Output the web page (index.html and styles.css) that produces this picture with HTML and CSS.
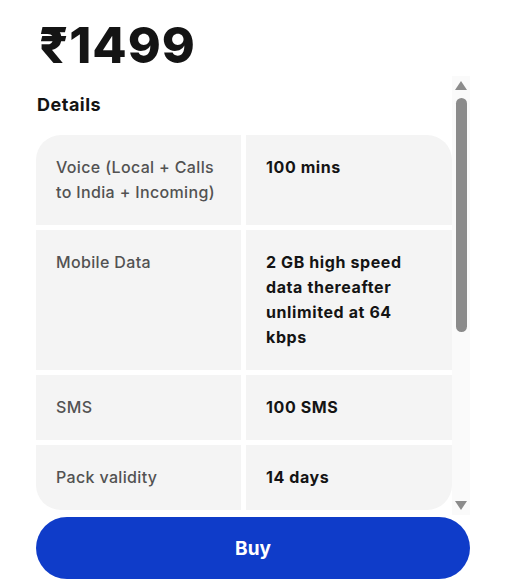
FILE: index.html
```html
<!DOCTYPE html>
<html lang="en">
<head>
    <meta charset="UTF-8">
    <meta name="viewport" content="width=device-width, initial-scale=1.0">
    <title>Pack details</title>
    <link rel="stylesheet" href="styles.css">
</head>
<body>

    <div class="page">
        <h1 class="price">₹1499</h1>

        <!-- Plan details with its scroll bar -->
        <div class="details-box">
            <div class="details-scroll">
                <h2>Details</h2>
                <div class="details-table">
                    <div class="cell label">Voice (Local + Calls to India + Incoming)</div>
                    <div class="cell value">100 mins</div>
                    <div class="cell label">Mobile Data</div>
                    <div class="cell value">2 GB high speed data thereafter unlimited at 64 kbps</div>
                    <div class="cell label">SMS</div>
                    <div class="cell value">100 SMS</div>
                    <div class="cell label">Pack validity</div>
                    <div class="cell value">14 days</div>
                </div>
            </div>

            <div class="scrollbar">
                <span class="arrow-up"></span>
                <span class="thumb"></span>
                <span class="arrow-down"></span>
            </div>
        </div>

        <button class="buy-btn">Buy</button>
    </div>

</body>
</html>
```

FILE: styles.css
```css
body {
    margin: 0;
    background-color: #ffffff;
    font-family: Inter, "Noto Sans", sans-serif;
    color: #141414;
}

.page {
    padding: 0 41px 0 36px;
}

.price {
    margin: 20px 0 0 3px;
    font-size: 50px;
    line-height: 50px;
    font-weight: 800;
    letter-spacing: 1px;
}

.details-box {
    display: flex;
    height: 439px;
    margin-top: 6px;
}

.details-scroll {
    flex: 1;
    overflow: hidden;
}

.details-scroll h2 {
    margin: 17px 0 18px 1px;
    font-size: 18px;
    line-height: 24px;
    font-weight: 700;
    letter-spacing: 0.5px;
}

.details-table {
    display: grid;
    grid-template-columns: 205px 206px;
    gap: 5px;
}

.cell {
    background-color: #f4f4f4;
    padding: 20px;
    font-size: 16px;
    line-height: 25px;
}

.label {
    color: #525252;
    font-weight: 500;
    letter-spacing: 0.35px;
}

.value {
    font-weight: 700;
    color: #141414;
    letter-spacing: 0.6px;
}

.details-table .cell:nth-child(1) {
    border-top-left-radius: 25px;
}

.details-table .cell:nth-child(2) {
    border-top-right-radius: 25px;
}

.details-table .cell:nth-last-child(2) {
    border-bottom-left-radius: 25px;
}

.details-table .cell:last-child {
    border-bottom-right-radius: 25px;
}

/* Scroll bar */
.scrollbar {
    width: 18px;
    background-color: #fafafa;
    display: flex;
    flex-direction: column;
    align-items: center;
    padding: 5px 0;
    box-sizing: border-box;
}

.arrow-up,
.arrow-down {
    width: 0;
    height: 0;
    border-left: 6.5px solid transparent;
    border-right: 6.5px solid transparent;
}

.arrow-up {
    border-bottom: 9px solid #8b8b8b;
}

.arrow-down {
    border-top: 9px solid #8b8b8b;
    margin-top: auto;
}

.thumb {
    width: 11px;
    height: 234px;
    margin-top: 8px;
    background-color: #8b8b8b;
    border-radius: 6px;
}

.buy-btn {
    display: block;
    width: 100%;
    height: 62px;
    margin-top: 2px;
    border: none;
    border-radius: 31px;
    background-color: #0f3cc9;
    color: #ffffff;
    font-family: Inter, "Noto Sans", sans-serif;
    font-size: 19px;
    font-weight: 700;
    cursor: pointer;
}
```
